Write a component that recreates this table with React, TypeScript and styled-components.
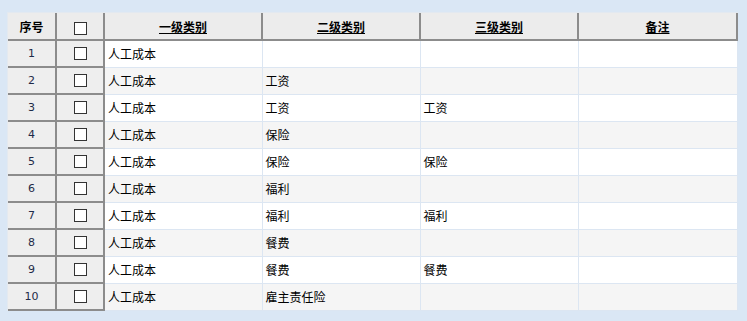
import React from "react"
import styled, { createGlobalStyle } from "styled-components"

const GlobalStyle = createGlobalStyle`
  html, body {
    margin: 0;
    padding: 0;
    background: #dae7f5;
  }
`

const Page = styled.div`
  width: 747px;
  height: 321px;
  padding: 12px 0 0 7px;
  box-sizing: border-box;
  background: #dae7f5;
`

const Frame = styled.div`
  width: 731px;
  border-top: 1px solid #e3e9f0;
  border-left: 1px solid #e3e9f0;
  box-sizing: border-box;
`

const Grid = styled.table`
  border-collapse: collapse;
  table-layout: fixed;
  width: 729px;
  font-family: "Noto Sans CJK SC", "Liberation Sans", sans-serif;
  font-size: 12px;
  color: #000;
`

const Col = styled.col<{ $w: number }>`
  width: ${(p) => p.$w}px;
`

const HeadCell = styled.th<{ $link?: boolean }>`
  height: 26px;
  padding: 0;
  background: #ececec;
  border-right: 2px solid #8c8c8c;
  border-bottom: 2px solid #8c8c8c;
  font-weight: bold;
  text-align: center;
  text-decoration: ${(p) => (p.$link ? "underline" : "none")};
`

const IndexCell = styled.td`
  height: 25px;
  padding: 0;
  background: #eeeeee;
  border-right: 2px solid #8c8c8c;
  border-bottom: 2px solid #8c8c8c;
  text-align: center;
  font-family: "DejaVu Sans", sans-serif;
  font-size: 11px;
  color: #1e2a48;
`

const DataCell = styled.td<{ $alt: boolean }>`
  padding: 0 3px;
  background: ${(p) => (p.$alt ? "#f5f5f5" : "#ffffff")};
  border-right: 1px solid #dce6f2;
  border-bottom: 1px solid #dce6f2;
  white-space: nowrap;
  overflow: hidden;
`

const Box = styled.span`
  display: inline-block;
  width: 11px;
  height: 11px;
  border: 1px solid #333;
  background: #fff;
  vertical-align: middle;
`

const rows: [string, string, string][] = [
  ["人工成本", "", ""],
  ["人工成本", "工资", ""],
  ["人工成本", "工资", "工资"],
  ["人工成本", "保险", ""],
  ["人工成本", "保险", "保险"],
  ["人工成本", "福利", ""],
  ["人工成本", "福利", "福利"],
  ["人工成本", "餐费", ""],
  ["人工成本", "餐费", "餐费"],
  ["人工成本", "雇主责任险", ""],
]

const App: React.FC = () => {
  return (
    <Page>
      <GlobalStyle />
      <Frame>
        <Grid>
          <colgroup>
            <Col $w={48} />
            <Col $w={48} />
            <Col $w={158} />
            <Col $w={158} />
            <Col $w={158} />
            <Col $w={159} />
          </colgroup>
          <thead>
            <tr>
              <HeadCell>序号</HeadCell>
              <HeadCell>
                <Box />
              </HeadCell>
              <HeadCell $link>一级类别</HeadCell>
              <HeadCell $link>二级类别</HeadCell>
              <HeadCell $link>三级类别</HeadCell>
              <HeadCell $link>备注</HeadCell>
            </tr>
          </thead>
          <tbody>
            {rows.map((r, i) => (
              <tr key={i}>
                <IndexCell>{i + 1}</IndexCell>
                <IndexCell>
                  <Box />
                </IndexCell>
                <DataCell $alt={i % 2 === 1}>{r[0]}</DataCell>
                <DataCell $alt={i % 2 === 1}>{r[1]}</DataCell>
                <DataCell $alt={i % 2 === 1}>{r[2]}</DataCell>
                <DataCell $alt={i % 2 === 1}></DataCell>
              </tr>
            ))}
          </tbody>
        </Grid>
      </Frame>
    </Page>
  )
}

export default App
